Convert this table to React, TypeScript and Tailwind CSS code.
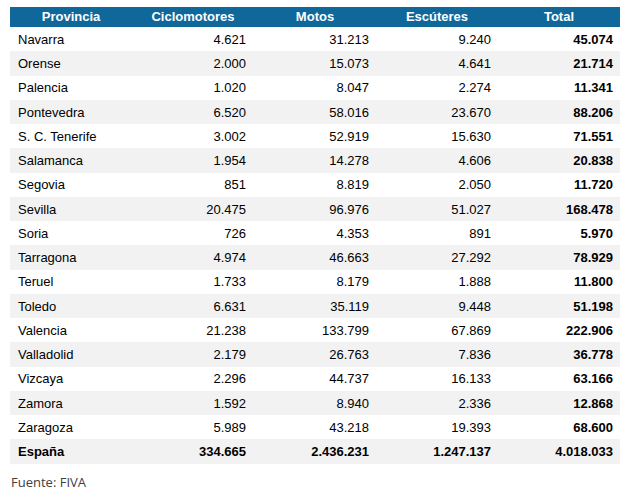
import React from "react";

const rows: [string, string, string, string, string][] = [
  ["Navarra", "4.621", "31.213", "9.240", "45.074"],
  ["Orense", "2.000", "15.073", "4.641", "21.714"],
  ["Palencia", "1.020", "8.047", "2.274", "11.341"],
  ["Pontevedra", "6.520", "58.016", "23.670", "88.206"],
  ["S. C. Tenerife", "3.002", "52.919", "15.630", "71.551"],
  ["Salamanca", "1.954", "14.278", "4.606", "20.838"],
  ["Segovia", "851", "8.819", "2.050", "11.720"],
  ["Sevilla", "20.475", "96.976", "51.027", "168.478"],
  ["Soria", "726", "4.353", "891", "5.970"],
  ["Tarragona", "4.974", "46.663", "27.292", "78.929"],
  ["Teruel", "1.733", "8.179", "1.888", "11.800"],
  ["Toledo", "6.631", "35.119", "9.448", "51.198"],
  ["Valencia", "21.238", "133.799", "67.869", "222.906"],
  ["Valladolid", "2.179", "26.763", "7.836", "36.778"],
  ["Vizcaya", "2.296", "44.737", "16.133", "63.166"],
  ["Zamora", "1.592", "8.940", "2.336", "12.868"],
  ["Zaragoza", "5.989", "43.218", "19.393", "68.600"],
];

export default function App() {
  return (
    <div className="w-[630px] h-[492px] bg-white pt-[7px] pl-[10px] font-['Liberation_Sans',Arial,sans-serif]">
      <div className="w-[610px]">
        <div className="grid grid-cols-5 h-[20px] bg-[#10679a] text-white font-bold text-[13px] items-center">
          <div className="text-center">Provincia</div>
          <div className="text-center">Ciclomotores</div>
          <div className="text-center">Motos</div>
          <div className="text-center">Escúteres</div>
          <div className="text-center">Total</div>
        </div>
        {rows.map((r, i) => (
          <div
            key={r[0]}
            className={`grid grid-cols-5 h-[24.25px] items-center text-[13px] text-black ${i % 2 === 1 ? "bg-[#f2f2f2]" : "bg-white"}`}
          >
            <div className="pl-[8px] pt-[1px]">{r[0]}</div>
            <div className="text-right pr-[8px] pt-[1px]">{r[1]}</div>
            <div className="text-right pr-[7px] pt-[1px]">{r[2]}</div>
            <div className="text-right pr-[7px] pt-[1px]">{r[3]}</div>
            <div className="text-right pr-[7px] pt-[1px] font-bold">{r[4]}</div>
          </div>
        ))}
        <div className="grid grid-cols-5 h-[24.25px] items-center text-[13px] text-black font-bold bg-[#f2f2f2]">
          <div className="pl-[8px] pt-[1px]">España</div>
          <div className="text-right pr-[8px] pt-[1px]">334.665</div>
          <div className="text-right pr-[7px] pt-[1px]">2.436.231</div>
          <div className="text-right pr-[7px] pt-[1px]">1.247.137</div>
          <div className="text-right pr-[7px] pt-[1px]">4.018.033</div>
        </div>
      </div>
      <div className="mt-[12px] pl-[1px] text-[13px] text-[#404040] font-['Open_Sans',sans-serif] leading-none">
        Fuente: FIVA
      </div>
    </div>
  );
}
